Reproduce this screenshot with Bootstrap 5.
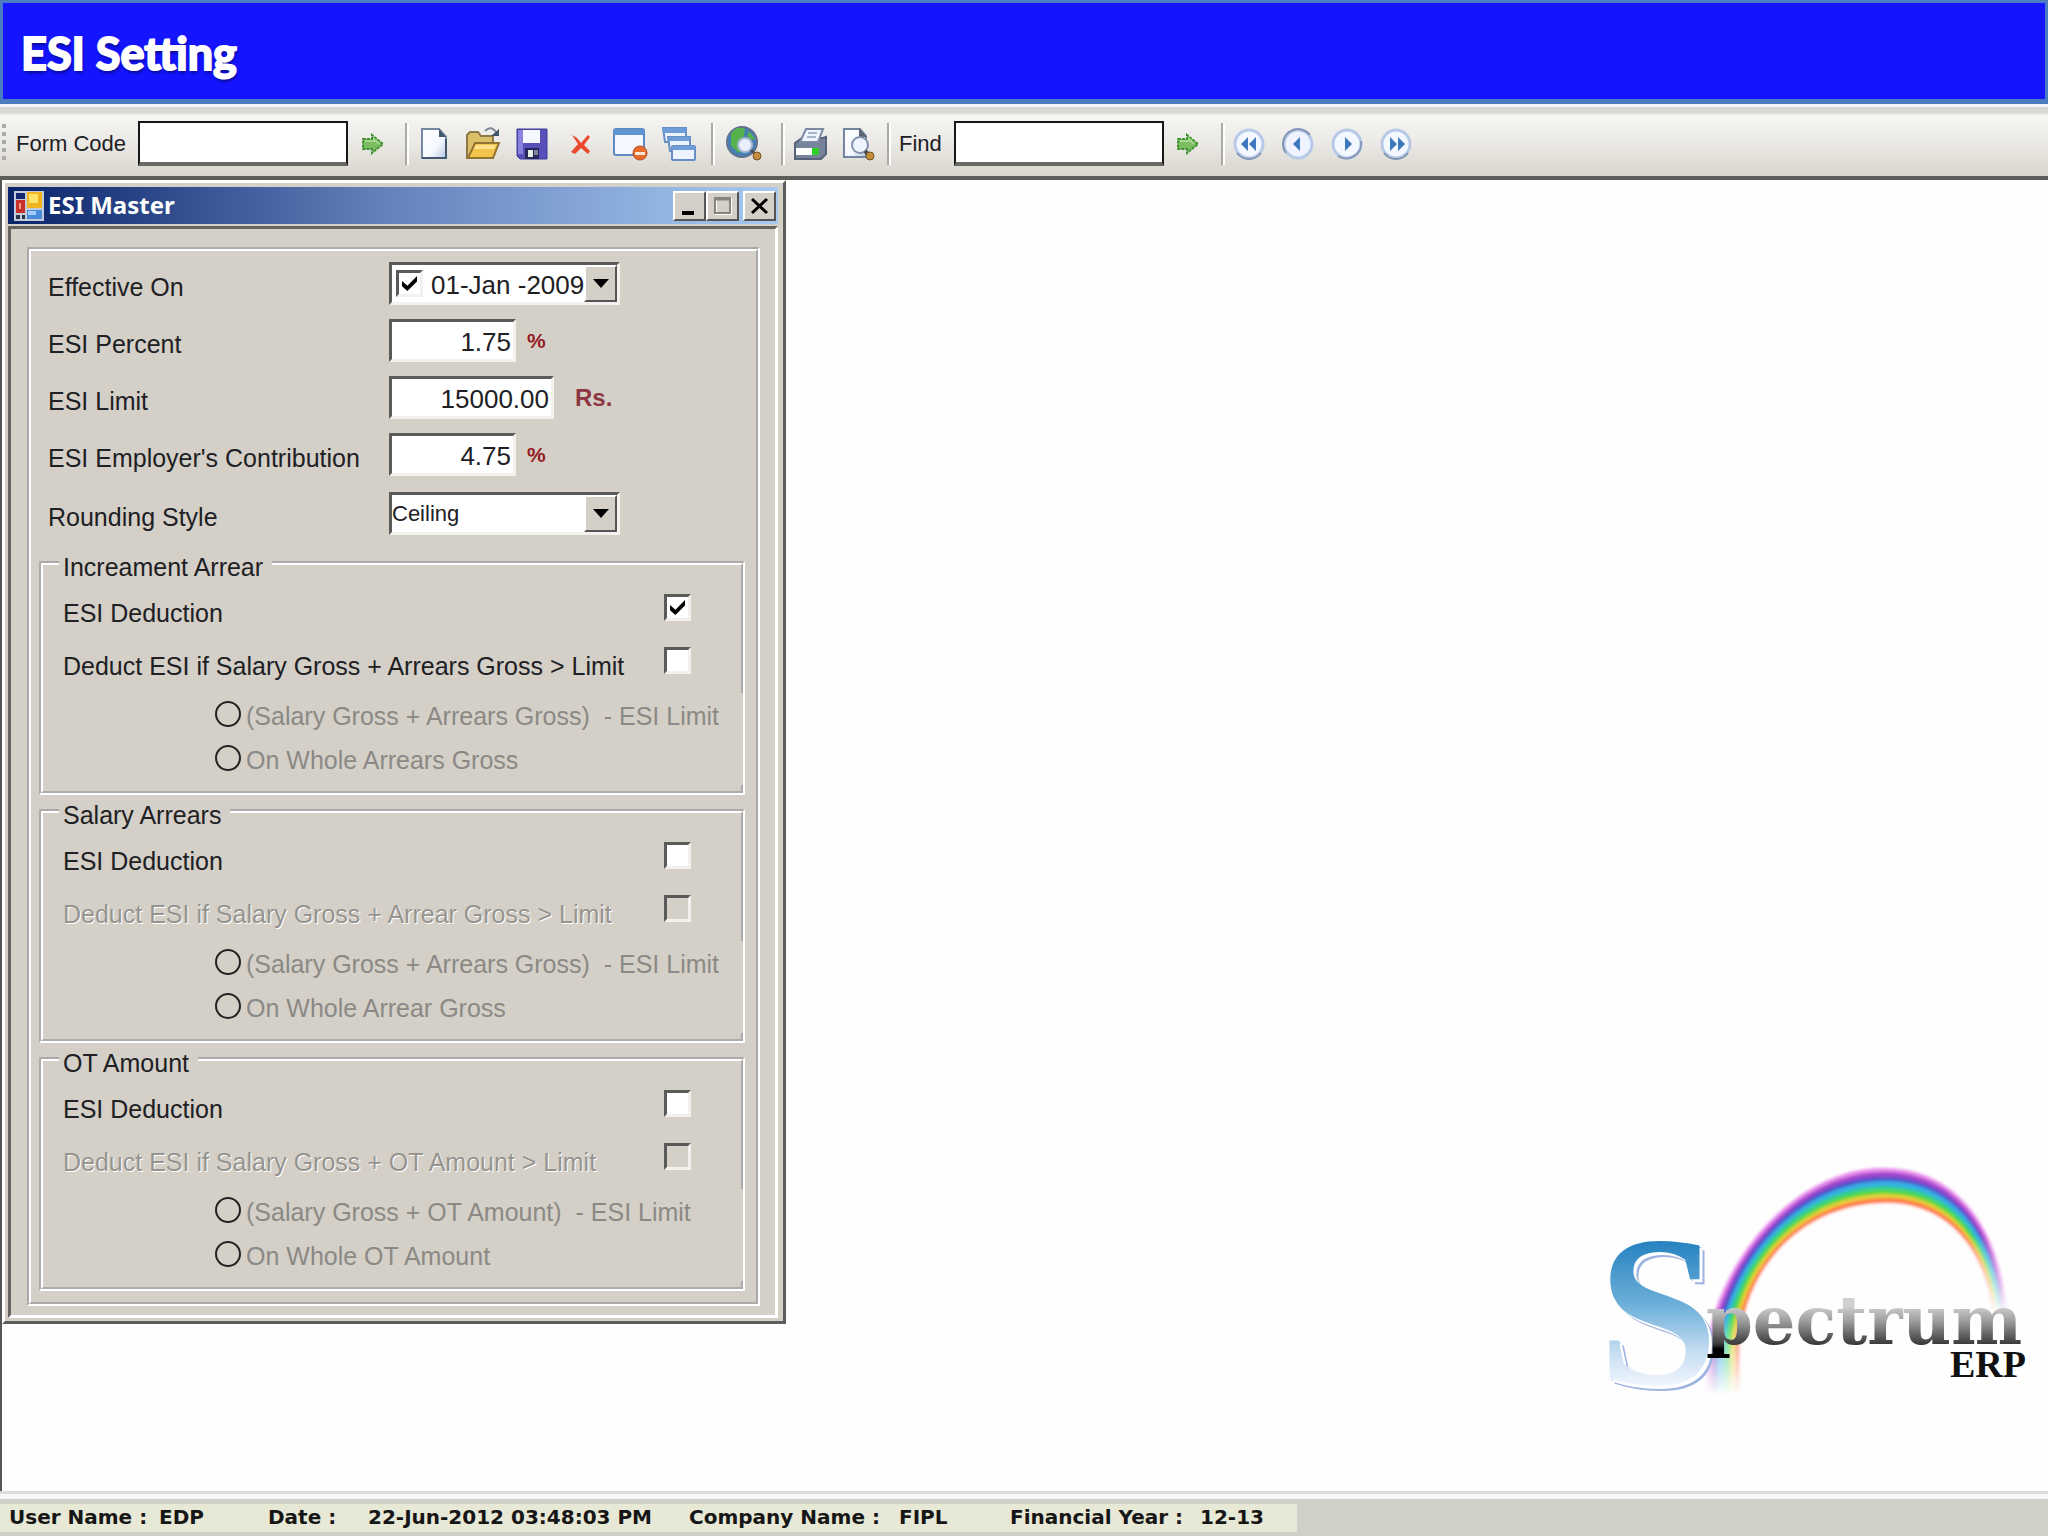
<!DOCTYPE html>
<html lang="en">
<head>
<meta charset="utf-8">
<meta name="viewport" content="width=device-width, initial-scale=1">
<title>ESI Setting</title>
<link href="https://cdn.jsdelivr.net/npm/bootstrap@5.3.0/dist/css/bootstrap.min.css" rel="stylesheet">
<script src="https://cdn.jsdelivr.net/npm/bootstrap@5.3.0/dist/js/bootstrap.bundle.min.js"></script>
<style>
  :root { --face: #d4d0c8; --ink: #202024; }
  body { font-family: "Liberation Sans", Arial, sans-serif; font-size: 25px; line-height: 32px; color: var(--ink); background: #fff; }
  .banner { background: #1414ff; border: 3px solid #4a7cc0; border-bottom-width: 5px; height: 104px; padding: 3px 18px 0; }
  .banner h1 { font: 700 45px/60px Lato, "Open Sans", sans-serif; color: #fff; -webkit-text-stroke: 2px #fff; text-shadow: 1px 3px 3px #0a0a90; margin: 0; }
  .toolstrip { border-top: 3px solid #f4f5fb; height: 76px; background: linear-gradient(#d9d9d3 0 6px, #f6f5f3 8px, #eceae6 50%, #d8d5cd); border-bottom: 4px solid #5c5c59; font: 22px/30px "Liberation Sans", Arial, sans-serif; padding: 4px 0 0 2px; }
  .grip { width: 4px; height: 40px; background: repeating-linear-gradient(#aaa 0 4px, transparent 4px 8px); margin-right: 10px; }
  .toolstrip input { width: 210px; height: 45px; border: 2px solid #161616; border-bottom: 4px solid #686865; border-radius: 0; background: #fff; padding: 0 8px; }
  .tool { border: 0; background: none; padding: 0; width: 49px; height: 45px; display: flex; align-items: center; justify-content: center; flex: none; }
  .tool.web { margin-right: 13px; }
  .divider { width: 4px; height: 42px; border-left: 2px solid #aaa9a6; border-right: 2px solid #fff; flex: none; }
  .desk { border-left: 2px solid #555; background: #fefefe; }
  .win { width: 784px; max-width: 100%; background: var(--face); border: 3px solid; border-color: #fff #5c5c5a #5c5c5a #fff; padding: 4px 5px 3px 3px; }
  .win-title { height: 37px; background: linear-gradient(90deg, #0a246a, #6583bd 50%, #a6caf0); padding: 0 2px 0 6px; margin-bottom: 2px; }
  .win-title h2 { font: 700 24px/34px "Noto Sans", sans-serif; color: #fff; margin: 0; padding-bottom: 2px; }
  .cap-btn { width: 33px; height: 30px; padding: 0; background: var(--face); border: 2px solid; border-color: #fff #555 #555 #fff; display: flex; align-items: center; justify-content: center; }
  .client { border: 3px solid; border-color: #666461 #fff #fff #666461; padding: 18px 15px 9px 16px; }
  .etched { border: 4px groove #fff; }
  .panel-box { padding: 11px 11px 11px 8px; }
  .field { padding-left: 9px; margin-bottom: 14px; height: 43px; }
  .field > label { width: 341px; line-height: 43px; padding-top: 4px; }
  .sunk { border: 3px solid; border-color: #5a5a58 #f4f2ee #f4f2ee #5a5a58; border-radius: 0; background: #fff; color: var(--ink); }
  .combo { width: 231px; height: 43px; }
  .combo input[type=text], .combo select { border: 0; background: none; padding: 0; flex: 1 1 0; min-width: 0; appearance: none; color: inherit; outline: 0; }
  .combo input[type=text] { font-size: 26px; padding-top: 3px; }
  .combo select { font-size: 22px; }
  .drop { width: 33px; flex: none; padding: 0; background: var(--face); border: 2px solid; border-color: #fff #555 #555 #fff; display: flex; align-items: center; justify-content: center; pointer-events: none; }
  .amount { width: 127px; height: 43px; text-align: right; padding: 3px 2px 0; font-size: 26px; }
  .amount.wide { width: 165px; }
  .unit { color: #941c24; font-weight: 700; font-size: 21px; margin-left: 11px; }
  .unit.rupee { color: #8c3644; font-size: 24px; margin-left: 21px; }
  .tick { appearance: none; width: 27px; height: 27px; margin: 0; flex: none; display: grid; place-items: center; }
  .tick:checked::before { content: ""; width: 15px; height: 15px; background: #000; clip-path: polygon(0 33%, 36% 65%, 100% 0, 100% 36%, 36% 100%, 0 68%); }
  .tick:disabled { background: var(--face); }
  .ring { appearance: none; width: 26px; height: 26px; border: 2px solid #222; border-radius: 50%; margin: 0 5px 0 0; flex: none; }
  fieldset.etched { position: relative; padding: 15px 50px 11px 20px; margin: 0 0 1px; }
  fieldset.etched:first-of-type { margin-top: 13px; }
  fieldset.etched:last-of-type { margin-bottom: 0; }
  fieldset.etched::after { content: ""; position: absolute; right: -4px; top: 115px; bottom: 6px; width: 4px; background: linear-gradient(90deg, var(--face) 50%, #fff 50%); }
  fieldset.etched legend { float: none; width: auto; font-size: 25px; line-height: 22px; padding: 8px 9px 0 4px; margin: 0 0 0 -4px; }
  .opt { height: 53px; padding-top: 1px; }
  .opt + .opt { height: 46px; }
  .opt label { padding-top: 3px; }
  .choice { height: 44px; padding-left: 152px; white-space: pre; color: #8b8985; margin-right: -48px; }
  .choice label { padding-top: 4px; }
  .off { color: #96948f; text-shadow: 1px 1px 0 #fff; }
  .logo { margin-bottom: 81px; flex: none; }
  .big-s { filter: drop-shadow(3px 3px 0 #fff) drop-shadow(2px 2px 0 #9db3df); }
  .status { border-top: 3px solid #dddbdd; height: 45px; background: linear-gradient(#f7f6f8 0 5px, #cfd0c8 5px); font: 700 20px/26px "DejaVu Sans", sans-serif; color: #161616; padding-top: 10px; }
  .status dl { width: 1297px; max-width: 100%; display: grid; grid-template-columns: 150px 109px 100px 321px 210px 111px 190px auto; background: #e7e8d5; padding-left: 9px; margin: 0; height: 28px; white-space: nowrap; }
  .status dd { margin: 0; }
  @media (max-width: 1300px) { .logo { display: none; } }
</style>
</head>
<body class="d-flex flex-column min-vh-100">
<header class="banner d-flex align-items-center"><h1>ESI Setting</h1></header>

<form class="toolstrip d-flex align-items-center" role="toolbar" aria-label="Main toolbar">
  <span class="grip"></span>
  <label for="code" class="me-2">Form Code</label>
  <input id="code" type="text" class="ms-1">
  <button type="button" class="tool" aria-label="Open form"><svg width="24" height="22" viewBox="0 0 24 22"><path d="M2 6h9V2l11 9-11 9v-4H2z" fill="#7cbd62" stroke="#429032" stroke-width="2" stroke-dasharray="3 1"/><path d="M4 8h9V6l5 5" fill="none" stroke="#a5d890" stroke-width="2"/></svg></button>
  <span class="divider ms-2"></span>
  <button type="button" class="tool" aria-label="New"><svg width="28" height="34" viewBox="0 0 28 34"><defs><linearGradient id="paper" x2="1" y2="1"><stop stop-color="#fff"/><stop offset=".6" stop-color="#f5f8ff"/><stop offset="1" stop-color="#b8c8e4"/></linearGradient></defs><path d="M2 2h17l7 8v21H2z" fill="url(#paper)" stroke="#7487a3" stroke-width="2"/><path d="M19 2v8h7z" fill="#40576e"/><path d="M2 31h24V12" fill="none" stroke="#41586f" stroke-width="2"/></svg></button>
  <button type="button" class="tool" aria-label="Open"><svg width="36" height="36" viewBox="0 0 36 36"><path d="M2 32V9l3-3h8l3 4h12v22z" fill="#dcc069" stroke="#8d7b47" stroke-width="2"/><path d="M10 17h24l-6 15H3z" fill="#f2c44b" stroke="#927331" stroke-width="2"/><path d="M11 19h20l-2 4H9z" fill="#ffe28b"/><path d="M20 5q6-6 11 1" fill="none" stroke="#7c8999" stroke-width="2"/><path d="M34 3v7h-8z" fill="#40536c"/></svg></button>
  <button type="button" class="tool" aria-label="Save"><svg width="32" height="32" viewBox="0 0 32 32"><path d="M1 1h30v30H4l-3-3z" fill="#5850b8" stroke="#3d3a98"/><path d="M2 2h5v24H2z" fill="#8981db"/><path d="M7 2h17v13H7z" fill="#f6f8ff"/><path d="M9 20h14v11H9z" fill="#24285c"/><path d="M12 22h5v7h-5z" fill="#e5f0e6"/><path d="M18 22h4v5h-4z" fill="#7c879a"/></svg></button>
  <button type="button" class="tool" aria-label="Delete"><svg width="22" height="24" viewBox="0 0 22 24"><path d="M2 3l5 3 4 5 7-8 2 2-6 8 6 6-2 3-7-6-6 6-4-2 7-8z" fill="#e9482c"/></svg></button>
  <button type="button" class="tool" aria-label="Close window"><svg width="36" height="34" viewBox="0 0 36 34"><rect x="2" y="2" width="30" height="26" rx="2" fill="#f4f8ff" stroke="#5d8ac2" stroke-width="2"/><path d="M2 2h30v6H2z" fill="#5f93d2"/><circle cx="28" cy="26" r="7" fill="#e66d2e" stroke="#b7481c"/><path d="M23 25h10v3H23z" fill="#ffe6d4"/></svg></button>
  <button type="button" class="tool" aria-label="Cascade windows"><svg width="36" height="36" viewBox="0 0 36 36"><g fill="#eef4ff" stroke="#668fc7" stroke-width="2"><path d="M2 2h23v14H4z"/><path d="M7 11h22v14H9z"/><rect x="11" y="20" width="23" height="14" rx="1"/></g><path d="M2 2h23v5H3zM7 11h22v4H8zM11 20h23v4H11z" fill="#6f9dd8"/></svg></button>
  <span class="divider ms-2 me-1"></span>
  <button type="button" class="tool web" aria-label="Search web"><svg width="38" height="38" viewBox="0 0 38 38"><circle cx="17" cy="17" r="15" fill="#457fb5" stroke="#64728b" stroke-width="2"/><path d="M6 8q7-8 14-4l-1 7-6 6 4 7-3 4-8-7zM24 6l7 9-6-1-3-3z" fill="#55b14b"/><circle cx="20" cy="20" r="7" fill="#eaf0fb" stroke="#a6b8d2" stroke-width="2"/><path d="M26 25l4 4" stroke="#4d5563" stroke-width="3"/><circle cx="32" cy="31" r="4" fill="#c68b3c" stroke="#745328"/></svg></button>
  <span class="divider"></span>
  <button type="button" class="tool" aria-label="Print"><svg width="36" height="34" viewBox="0 0 36 34"><path d="M3 16l7-5h21l3-1v17l-5 5H3z" fill="#76839b" stroke="#56637a" stroke-width="2"/><path d="M14 2h17l-5 13H8z" fill="#edf3ff" stroke="#7c8aa3" stroke-width="2"/><path d="M16 6h9M15 10h9" stroke="#a7b4ca" stroke-width="2"/><path d="M4 21h23v7H4z" fill="#fff"/><path d="M20 21h7v7h-7z" fill="#32ce28"/></svg></button>
  <button type="button" class="tool me-1" aria-label="Print preview"><svg width="34" height="36" viewBox="0 0 34 36"><path d="M2 3h16l6 7v21H2z" fill="url(#paper)" stroke="#73859f" stroke-width="2"/><path d="M17 2v9h8z" fill="#5b6674"/><circle cx="18" cy="19" r="8" fill="#f0f4ff" stroke="#8293ab" stroke-width="2"/><path d="M23 25l4 4" stroke="#4b5059" stroke-width="4"/><circle cx="28" cy="30" r="4" fill="#c68d38" stroke="#745525"/></svg></button>
  <span class="divider me-2"></span>
  <label for="find" class="me-2">Find</label>
  <input id="find" type="text" class="ms-1">
  <button type="button" class="tool" aria-label="Find"><svg width="24" height="22" viewBox="0 0 24 22"><path d="M2 6h9V2l11 9-11 9v-4H2z" fill="#7cbd62" stroke="#429032" stroke-width="2" stroke-dasharray="3 1"/><path d="M4 8h9V6l5 5" fill="none" stroke="#a5d890" stroke-width="2"/></svg></button>
  <span class="divider ms-2"></span>
  <button type="button" class="tool" aria-label="First"><svg width="34" height="34" viewBox="0 0 34 34"><circle cx="17" cy="17" r="14" fill="#f3f7ff" stroke="#b8cae8" stroke-width="3"/><path d="M5 26a15 15 0 0 0 24 0" fill="none" stroke="#8295b5" stroke-width="2"/><path d="M16 10v14l-7-7zM24 10v14l-7-7z" fill="#3d78bc"/></svg></button>
  <button type="button" class="tool" aria-label="Previous"><svg width="34" height="34" viewBox="0 0 34 34"><circle cx="17" cy="17" r="14" fill="#eef3ff" stroke="#b8cae8" stroke-width="3"/><path d="M5 26A15 15 0 0 1 29 8" fill="none" stroke="#8295b5" stroke-width="2"/><path d="M19 10v14l-7-7z" fill="#3d78bc"/></svg></button>
  <button type="button" class="tool" aria-label="Next"><svg width="34" height="34" viewBox="0 0 34 34"><circle cx="17" cy="17" r="14" fill="#f3f7ff" stroke="#b8cae8" stroke-width="3"/><path d="M8 29A15 15 0 0 0 31 14" fill="none" stroke="#8295b5" stroke-width="2"/><path d="M15 10v14l7-7z" fill="#3d78bc"/></svg></button>
  <button type="button" class="tool" aria-label="Last"><svg width="34" height="34" viewBox="0 0 34 34"><circle cx="17" cy="17" r="14" fill="#f3f7ff" stroke="#b8cae8" stroke-width="3"/><path d="M5 26a15 15 0 0 0 24 0" fill="none" stroke="#8295b5" stroke-width="2"/><path d="M11 10v14l7-7zM19 10v14l7-7z" fill="#3d78bc"/></svg></button>
</form>

<main class="desk d-flex flex-grow-1 justify-content-between">
  <section class="win align-self-start">
    <div class="win-title d-flex align-items-center">
      <svg class="me-1" width="30" height="30" viewBox="0 0 30 30"><path d="M0 0h30v30H0z" fill="#c3cad8"/><path d="M2 2h9v6H2z" fill="#14286f"/><path d="M2 9h9v13H2z" fill="#c92f28"/><path d="M5 12h2v6H5z" fill="#f0988a"/><path d="M2 24h4v4H2zM8 24h3v4H8z" fill="#28324f"/><path d="M13 1h15v16H13z" fill="#efb41e"/><path d="M15 3h9v9h-9z" fill="#ffe269"/><path d="M13 19h15v9H13z" fill="#4c8bd9"/><path d="M14 20h8v4h-8z" fill="#a0ccff"/></svg>
      <h2 class="flex-grow-1">ESI Master</h2>
      <button type="button" class="cap-btn" aria-label="Minimize"><svg width="20" height="20" viewBox="0 0 20 20"><path d="M2 15h12v4H2z" fill="#000"/></svg></button>
      <button type="button" class="cap-btn me-1" aria-label="Maximize"><svg width="20" height="20" viewBox="0 0 20 20"><path d="M3 3h15v15H3z" fill="none" stroke="#fff" stroke-width="2"/><path d="M2 2h15v15H2z" fill="none" stroke="#858580" stroke-width="2"/><path d="M2 3h15" stroke="#858580" stroke-width="3"/></svg></button>
      <button type="button" class="cap-btn" aria-label="Close"><svg width="20" height="20" viewBox="0 0 20 20"><path d="M2 3l15 14M17 3L2 17" stroke="#000" stroke-width="3"/></svg></button>
    </div>
    <form class="client">
      <div class="etched panel-box">
        <div class="field d-flex">
          <label for="effective">Effective On</label>
          <div class="combo sunk d-flex">
            <input type="checkbox" class="tick sunk align-self-center ms-1 me-2" checked aria-label="Use effective date">
            <input id="effective" type="text" value="01-Jan -2009">
            <button type="button" class="drop" aria-label="Pick a date"><svg width="16" height="9" viewBox="0 0 16 9"><path d="M0 0h16L8 9z"/></svg></button>
          </div>
        </div>
        <div class="field d-flex">
          <label for="percent">ESI Percent</label>
          <input id="percent" class="sunk amount" type="text" value="1.75"><span class="unit align-self-center">%</span>
        </div>
        <div class="field d-flex">
          <label for="limit">ESI Limit</label>
          <input id="limit" class="sunk amount wide" type="text" value="15000.00"><span class="unit rupee align-self-center">Rs.</span>
        </div>
        <div class="field d-flex">
          <label for="employer">ESI Employer's Contribution</label>
          <input id="employer" class="sunk amount" type="text" value="4.75"><span class="unit align-self-center">%</span>
        </div>
        <div class="field d-flex mt-3 mb-0">
          <label for="rounding">Rounding Style</label>
          <div class="combo sunk d-flex">
            <select id="rounding"><option>Ceiling</option><option>Floor</option></select>
            <span class="drop"><svg width="16" height="9" viewBox="0 0 16 9"><path d="M0 0h16L8 9z"/></svg></span>
          </div>
        </div>

        <fieldset class="etched">
          <legend>Increament Arrear</legend>
          <div class="opt d-flex justify-content-between"><label for="i1">ESI Deduction</label><input id="i1" type="checkbox" class="tick sunk" checked></div>
          <div class="opt d-flex justify-content-between"><label for="i2">Deduct ESI if Salary Gross + Arrears Gross &gt; Limit</label><input id="i2" type="checkbox" class="tick sunk"></div>
          <div class="choice d-flex align-items-center"><input id="i3" name="inc" type="radio" class="ring" disabled><label for="i3">(Salary Gross + Arrears Gross)  - ESI Limit</label></div>
          <div class="choice d-flex align-items-center"><input id="i4" name="inc" type="radio" class="ring" disabled><label for="i4">On Whole Arrears Gross</label></div>
        </fieldset>
        <fieldset class="etched">
          <legend>Salary Arrears</legend>
          <div class="opt d-flex justify-content-between"><label for="s1">ESI Deduction</label><input id="s1" type="checkbox" class="tick sunk"></div>
          <div class="opt d-flex justify-content-between"><label for="s2" class="off">Deduct ESI if Salary Gross + Arrear Gross &gt; Limit</label><input id="s2" type="checkbox" class="tick sunk" disabled></div>
          <div class="choice d-flex align-items-center"><input id="s3" name="sal" type="radio" class="ring" disabled><label for="s3">(Salary Gross + Arrears Gross)  - ESI Limit</label></div>
          <div class="choice d-flex align-items-center"><input id="s4" name="sal" type="radio" class="ring" disabled><label for="s4">On Whole Arrear Gross</label></div>
        </fieldset>
        <fieldset class="etched">
          <legend>OT Amount</legend>
          <div class="opt d-flex justify-content-between"><label for="o1">ESI Deduction</label><input id="o1" type="checkbox" class="tick sunk"></div>
          <div class="opt d-flex justify-content-between"><label for="o2" class="off">Deduct ESI if Salary Gross + OT Amount &gt; Limit</label><input id="o2" type="checkbox" class="tick sunk" disabled></div>
          <div class="choice d-flex align-items-center"><input id="o3" name="ot" type="radio" class="ring" disabled><label for="o3">(Salary Gross + OT Amount)  - ESI Limit</label></div>
          <div class="choice d-flex align-items-center"><input id="o4" name="ot" type="radio" class="ring" disabled><label for="o4">On Whole OT Amount</label></div>
        </fieldset>
      </div>
    </form>
  </section>

  <svg class="logo align-self-end" width="458" height="270" viewBox="0 0 458 270" role="img" aria-label="Spectrum ERP">
    <defs>
      <linearGradient id="sBlue" gradientUnits="userSpaceOnUse" x1="0" y1="98" x2="0" y2="248"><stop stop-color="#2380be"/><stop offset=".45" stop-color="#6eb0da"/><stop offset=".75" stop-color="#c3dcf1"/><stop offset="1" stop-color="#f4f8ff"/></linearGradient>
      <linearGradient id="steel" gradientUnits="userSpaceOnUse" x1="0" y1="166" x2="0" y2="220"><stop stop-color="#d0d0d0"/><stop offset=".3" stop-color="#999"/><stop offset=".7" stop-color="#3c3c3c"/><stop offset=".8" stop-color="#000"/></linearGradient>
      <linearGradient id="fadeL" gradientUnits="userSpaceOnUse" x1="0" y1="175" x2="0" y2="255"><stop stop-color="#fff"/><stop offset=".5" stop-color="#777"/><stop offset="1" stop-color="#000"/></linearGradient>
      <linearGradient id="fadeR" gradientUnits="userSpaceOnUse" x1="0" y1="95" x2="0" y2="176"><stop stop-color="#fff"/><stop offset="1" stop-color="#000"/></linearGradient>
      <mask id="fade" maskUnits="userSpaceOnUse" x="0" y="0" width="458" height="270"><path d="M0 0h297v270H0z" fill="url(#fadeL)"/><path d="M296 0h162v270H296z" fill="url(#fadeR)"/></mask>
      <filter id="soft" x="-5%" y="-5%" width="110%" height="110%"><feGaussianBlur stdDeviation="1.6"/></filter>
    </defs>
    <g mask="url(#fade)"><g filter="url(#soft)">
      <path fill="#e88aec" d="M116 260V215C122 130 200 28 293 28C372 28 412 95 418 180V260z"/>
      <path fill="#a044cc" d="M120 260V215C125 131 201 32 294 32C370 32 410 97 416 180V260z"/>
      <path fill="#4a54cc" d="M124 260V215C128 131 202 37 294 37C368 37 408 99 414 180V260z"/>
      <path fill="#34aee6" d="M128 260V215C132 132 203 41 295 41C367 41 407 101 412 180V260z"/>
      <path fill="#32cf90" d="M133 260V215C135 132 204 46 295 46C365 46 405 103 410 180V260z"/>
      <path fill="#5cd83c" d="M137 260V215C138 133 205 50 296 50C363 50 403 104 408 180V260z"/>
      <path fill="#e8d038" d="M141 260V215C141 134 206 54 296 54C361 54 402 106 407 180V260z"/>
      <path fill="#ff7c48" d="M145 260V215C145 134 207 58 297 58C360 58 400 108 405 180V260z"/>
      <path fill="#fefefe" d="M150 260V215C148 135 208 63 297 63C358 63 398 110 403 180V260z"/>
    </g></g>
    <text class="big-s" x="8" y="244" font-family="Liberation Serif, serif" font-weight="700" font-size="216" fill="url(#sBlue)">S</text>
    <text x="116" y="204" font-family="DejaVu Serif, serif" font-weight="700" font-size="67" fill="url(#steel)">pectrum</text>
    <text x="436" y="237" text-anchor="end" font-family="Liberation Serif, serif" font-weight="700" font-size="38" fill="#111">ERP</text>
  </svg>
</main>

<footer class="status">
  <dl>
    <dt>User Name :</dt><dd>EDP</dd>
    <dt>Date :</dt><dd>22-Jun-2012 03:48:03 PM</dd>
    <dt>Company Name :</dt><dd>FIPL</dd>
    <dt>Financial Year :</dt><dd>12-13</dd>
  </dl>
</footer>
</body>
</html>
